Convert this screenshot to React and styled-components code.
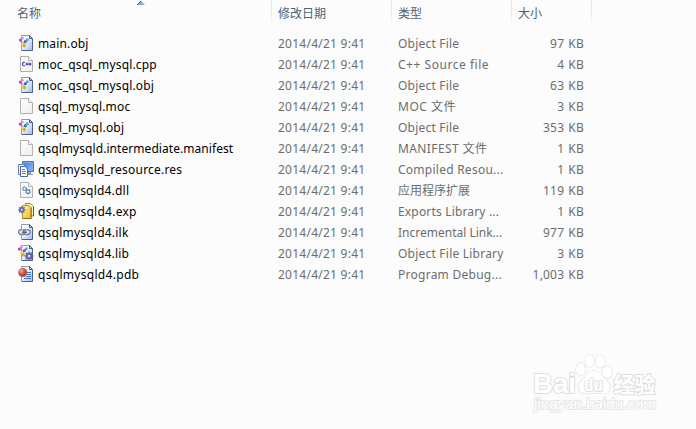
import React from 'react'
import styled, { createGlobalStyle } from 'styled-components'

const GlobalStyles = createGlobalStyle`
  body {
    margin: 0;
    background: #fcfcfc;
    overflow: hidden;
  }
`;

const Explorer = styled.div`
  position: relative;
  box-sizing: border-box;
  width: 696px;
  height: 429px;
  background: #fcfcfc;
  color: #6d6d6d;
  font: 12px/21px 'Noto Sans', 'Noto Sans CJK SC', sans-serif;
  white-space: nowrap;
`;

const Header = styled.div`
  display: grid;
  grid-template-columns: 272px 120px 120px 80px;
  height: 33px;
`;

const HeaderCell = styled.div`
  box-sizing: border-box;
  height: 24px;
  padding: 3px 0 0 ${(props) => props.$pad || 6}px;
  color: #4c607a;
  background: linear-gradient(#dfe9f5, #e3ebf5 60%, #fcfcfc) right top / 1px 24px no-repeat;
`;

const SortArrow = styled.svg`
  position: absolute;
  left: 137px;
  top: 1px;
`;

const Row = styled.div`
  display: grid;
  grid-template-columns: 20px 240px 120px 120px 66px;
  height: 21px;
  padding-left: 18px;
`;

const Icon = styled.svg`
  display: block;
  width: 16px;
  height: 16px;
  margin-top: 2px;
`;

const Cell = styled.span`
  letter-spacing: ${(props) => props.$spacing || 0}px;
`;

const Name = styled(Cell)`
  color: #000;
`;

const Size = styled(Cell)`
  text-align: right;
  word-spacing: 0.8px;
`;

const Watermark = styled.svg`
  position: absolute;
  left: 528px;
  top: 348px;
`;

const BluePage = () => (
  <>
    <path d="M3.5.5h8l3 3v12h-11z" fill="url(#sheet)" stroke="#8f9db8" />
    <path d="M14.5 4v11.5H4" fill="none" stroke="#4c618a" />
    <path d="M11.5.5v3h3z" fill="#e7edf7" stroke="#475b7b" />
  </>
)

const GreyPage = () => (
  <>
    <path d="M2.5.5h8l4 4v11h-12z" fill="url(#paper)" stroke="#b0b0b0" />
    <path d="M10.5.5v4h4" fill="#f5f5f5" stroke="#b5b5b5" />
  </>
)

const Molecule = () => (
  <>
    <path d="M4 6l3 4M6 8l3-3" stroke="#8c93a6" strokeWidth=".8" />
    <circle cx="2.4" cy="5.1" r="1.6" fill="#c243c6" />
    <circle cx="4.3" cy="3.2" r="1.4" fill="#e884e4" />
    <circle cx="7.3" cy="6.7" r="1.6" fill="#2f73cb" />
    <circle cx="9.3" cy="4.8" r="1.5" fill="#5c9ce8" />
    <circle cx="4.7" cy="8.6" r="1.5" fill="#f5d44c" />
    <circle cx="6.2" cy="10.7" r="1.7" fill="#e0aa1d" />
  </>
)

const Gear = ({ x, y, size, color }) => (
  <g transform={`translate(${x} ${y}) scale(${size})`} stroke={color} fill="none">
    <circle r="2.3" strokeWidth="2" fill="#dce1f4" />
    <path d="M0-4.5v2M0 2.5v2M-4.5 0h2M2.500 0h2M-3.2-3.2l1.500 1.500M1.700 1.700l1.500 1.500M-3.200 3.200l1.500-1.500M1.700-1.700l1.500-1.500" strokeWidth="1.5" />
  </g>
)

const icons = {
  obj: <><BluePage /><Molecule /></>,
  file: <GreyPage />,
  cpp: (
    <>
      <GreyPage />
      <path d="M7 6.300H5.500L4.500 7.300v1.500l1 1H7M7.500 8.100h3M9 6.600v3M10.500 8.100h3M12 6.600v3" fill="none" stroke="#3940ae" strokeWidth="1.1" />
    </>
  ),
  res: (
    <>
      <path d="M4.5.5h11v10h-11z" fill="url(#screen)" stroke="#56719f" />
      <path d="M5.5 1.5h9v8h-9z" fill="none" stroke="#7fabf0" />
      <path d="M9 11h4v2h2v1H8z" fill="#8698b4" />
      <path d="M.5 3.5h5l2 2v8h-7z" fill="#e4edfb" stroke="#6b83aa" />
      <path d="M2.5 5.500h4.500l2.500 2.500v7.500h-7z" fill="#fff" stroke="#456a9f" />
      <path d="M4 8.500h3M4 10.500h4M4 12.500h4" stroke="#4e7fcb" />
    </>
  ),
  dll: (
    <>
      <GreyPage />
      <circle cx="6.500" cy="6.700" r="1.700" fill="#eff8fc" stroke="#5887ab" strokeWidth="1.400" strokeDasharray="1.100 .300" />
      <circle cx="10" cy="9.600" r="1.900" fill="#eff8fc" stroke="#3e719c" strokeWidth="1.500" strokeDasharray="1.200 .300" />
    </>
  ),
  exp: (
    <>
      <path d="M7.500.500h5l3 3v9.500h-8z" fill="#fff3bd" stroke="#9d8240" />
      <path d="M4.500 2.500h6.500l2 2v11h-8.500z" fill="url(#gold)" stroke="#c59429" />
      <path d="M13.200 4.500v11H4.500" fill="none" stroke="#94691b" />
      <path d="M15.500 4v9" stroke="#5a5449" />
      <Gear x={3.8} y={6.8} size={0.82} color="#626cb0" />
    </>
  ),
  ilk: (
    <>
      <BluePage />
      <g fill="none" stroke="#748398" strokeWidth="1.400">
        <rect x=".700" y="5.700" width="6.300" height="4.800" rx="2.400" fill="#e9eef5" />
        <rect x="5.800" y="5.700" width="6.300" height="4.800" rx="2.400" fill="#e9eef5" />
        <path d="M4 8.200h5" stroke="#4f5d72" />
      </g>
      <path d="M2.500 6h2.500M8 6h2.500" stroke="#dfe6ee" strokeWidth=".6" />
    </>
  ),
  lib: (
    <>
      <BluePage />
      <g transform="translate(-1 -1)"><Molecule /></g>
      <Gear x={11} y={11} size={1} color="#5e66ad" />
    </>
  ),
  pdb: (
    <>
      <BluePage />
      <path d="M9 6.500h4M9 8.500h4M8 10.500h5M6 12.500h7" stroke="#3f72c8" />
      <circle cx="4.700" cy="6.500" r="4.500" fill="url(#ball)" />
    </>
  ),
}

const files = [
  { icon: 'obj', name: 'main.obj', nameSpacing: 0.15, type: 'Object File', typeSpacing: 0.2, size: '97 KB' },
  { icon: 'cpp', name: 'moc_qsql_mysql.cpp', nameSpacing: 0.17, type: 'C++ Source file', typeSpacing: 0.53, size: '4 KB' },
  { icon: 'obj', name: 'moc_qsql_mysql.obj', nameSpacing: 0.17, type: 'Object File', typeSpacing: 0.2, size: '63 KB' },
  { icon: 'file', name: 'qsql_mysql.moc', nameSpacing: 0.17, type: 'MOC 文件', typeSpacing: 0.5, size: '3 KB' },
  { icon: 'obj', name: 'qsql_mysql.obj', nameSpacing: 0.2, type: 'Object File', typeSpacing: 0.2, size: '353 KB' },
  { icon: 'file', name: 'qsqlmysqld.intermediate.manifest', nameSpacing: 0.06, type: 'MANIFEST 文件', typeSpacing: 0.4, size: '1 KB' },
  { icon: 'res', name: 'qsqlmysqld_resource.res', nameSpacing: 0.21, type: 'Compiled Resou...', typeSpacing: 0.25, size: '1 KB' },
  { icon: 'dll', name: 'qsqlmysqld4.dll', nameSpacing: 0.2, type: '应用程序扩展', size: '119 KB' },
  { icon: 'exp', name: 'qsqlmysqld4.exp', nameSpacing: 0.25, type: 'Exports Library ...', typeSpacing: 0.17, size: '1 KB' },
  { icon: 'ilk', name: 'qsqlmysqld4.ilk', nameSpacing: 0.22, type: 'Incremental Link...', size: '977 KB' },
  { icon: 'lib', name: 'qsqlmysqld4.lib', nameSpacing: 0.2, type: 'Object File Library', typeSpacing: 0.22, size: '3 KB' },
  { icon: 'pdb', name: 'qsqlmysqld4.pdb', nameSpacing: 0.3, type: 'Program Debug...', typeSpacing: 0.26, size: '1,003 KB' },
]

const Gradients = () => (
  <Watermark width="0" height="0">
    <defs>
      <linearGradient id="sheet" x2="1" y2="1"><stop stopColor="#fff" /><stop offset=".4" stopColor="#f2f6fd" /><stop offset="1" stopColor="#9fb8e2" /></linearGradient>
      <linearGradient id="paper" x2="1" y2="1"><stop stopColor="#fff" /><stop offset="1" stopColor="#ededed" /></linearGradient>
      <linearGradient id="screen" x2="1" y2="1"><stop stopColor="#3c79dc" /><stop offset="1" stopColor="#8fc0ff" /></linearGradient>
      <linearGradient id="gold" x2="1" y2="1"><stop stopColor="#fff0a3" /><stop offset="1" stopColor="#efb92d" /></linearGradient>
      <radialGradient id="ball" cx=".35" cy=".3"><stop stopColor="#f1aca2" /><stop offset=".6" stopColor="#d0655a" /><stop offset="1" stopColor="#b34d44" /></radialGradient>
    </defs>
  </Watermark>
)

const BaiduMark = () => (
  <Watermark width="136" height="72" fill="#fff" stroke="#e0e0e0" strokeWidth="2" paintOrder="stroke" strokeLinejoin="round">
    <text x="5" y="45" fontFamily="Liberation Sans, sans-serif" fontSize="27" fontWeight="700" textLength="43" lengthAdjust="spacingAndGlyphs">Bai</text>
    <g strokeWidth="1.2">
      <ellipse cx="52.7" cy="21.3" rx="4.6" ry="6.2" />
      <ellipse cx="61.7" cy="13" rx="4.5" ry="6.4" />
      <ellipse cx="72.3" cy="13.7" rx="4.8" ry="6.2" />
      <ellipse cx="79.3" cy="24.3" rx="4.8" ry="6" />
      <path d="M66 23C60 23 58 29 53 33.500c-4 4-3 12 4 12 4 0 5-.700 9-.700s5 .700 10 .700c7 0 8-8 3-12.500-5-4.500-7-10-13-10z" />
    </g>
    <text x="56" y="42.500" fontFamily="Liberation Sans, sans-serif" fontSize="18" fontWeight="700" textLength="19" lengthAdjust="spacingAndGlyphs">du</text>
    <text x="85.500" y="44" fontFamily="Noto Sans CJK SC, sans-serif" fontSize="21" fontWeight="700">经验</text>
    <text x="6" y="61" fontFamily="Liberation Sans, sans-serif" fontSize="14" stroke="#e6e6e6" strokeWidth="1.800" textLength="122" lengthAdjust="spacingAndGlyphs">jingyan.baidu.com</text>
  </Watermark>
)

const App = () => {
  return (
    <Explorer>
      <GlobalStyles />
      <Gradients />
      <Header>
        <HeaderCell $pad={17}>名称</HeaderCell>
        <HeaderCell>修改日期</HeaderCell>
        <HeaderCell>类型</HeaderCell>
        <HeaderCell>大小</HeaderCell>
      </Header>
      <SortArrow width="8" height="4">
        <path d="M4 0l4 4H0z" fill="#7fb3d0" />
        <path d="M4 0L0 4" stroke="#36586d" />
      </SortArrow>
      {files.map((file) => (
        <Row key={file.name}>
          <Icon viewBox="0 0 16 16">{icons[file.icon]}</Icon>
          <Name $spacing={file.nameSpacing}>{file.name}</Name>
          <Cell $spacing={0.25}>2014/4/21 9:41</Cell>
          <Cell $spacing={file.typeSpacing}>{file.type}</Cell>
          <Size $spacing={0.2}>{file.size}</Size>
        </Row>
      ))}
      <BaiduMark />
    </Explorer>
  )
}

export default App
